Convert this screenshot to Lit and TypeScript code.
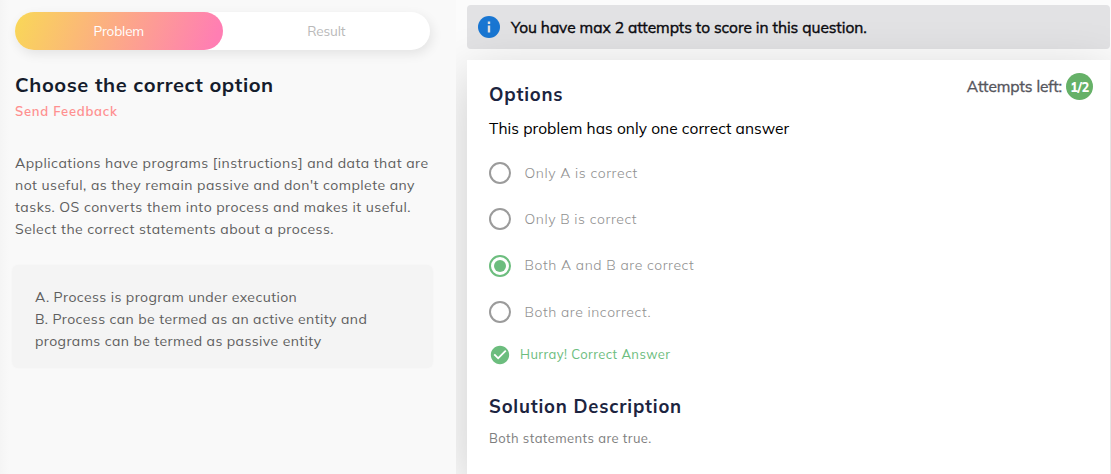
import { LitElement, html, css } from "lit";
import { customElement, property } from "lit/decorators.js";
import { classMap } from "lit/directives/class-map.js";

@customElement("option-row")
class OptionRow extends LitElement {
  @property() label = "";
  @property({ type: Boolean }) selected = false;

  static styles = css`
    :host { display: block; height: 46.3px; }
    .row { display: flex; align-items: center; height: 24px; }
    .ring {
      box-sizing: border-box; width: 22px; height: 22px; flex: none;
      border: 2px solid #9b9b9b; border-radius: 50%;
      display: grid; place-items: center; margin-right: 13.5px;
    }
    .ring.on { border-color: #6cbd7e; }
    .ring.on::after { content: ""; width: 12px; height: 12px; border-radius: 50%; background: #6cbd7e; }
    .text { font-size: 14px; font-weight: 300; letter-spacing: 0.56px; color: #909090; white-space: nowrap; padding-bottom: 0.6px; }
  `;

  render() {
    return html`<div class="row">
      <span class=${classMap({ ring: true, on: this.selected })}></span>
      <span class="text">${this.label}</span>
    </div>`;
  }
}

@customElement("app-root")
class AppRoot extends LitElement {
  static styles = css`
    :host {
      display: grid; grid-template-columns: 456px 1fr;
      width: 1111px; height: 474px; overflow: hidden;
      font-family: Muli, Mulish, Lato, sans-serif; background: #fbfbfb;
    }
    * { box-sizing: border-box; }
    h1, h2, p { margin: 0; white-space: nowrap; }
    .left { padding: 12px 26px 0 15px; background: linear-gradient(90deg, #f5f5f5, #f9f9f9 9px); position: relative; z-index: 1; }
    .tabs {
      display: flex; height: 38px; border-radius: 19px; background: #fff;
      box-shadow: 2px 4px 12px rgba(0, 0, 0, 0.09);
      font-size: 13.5px; line-height: 38px; text-align: center; letter-spacing: -0.16px;
    }
    .tab { flex: 1; color: #b9b9b9; }
    .tab.active { color: #fff; border-radius: 19px; background: linear-gradient(110deg, #f9d857, #ff7eb3 95%); }
    h1 { margin-top: 21px; font-size: 20px; line-height: 28px; letter-spacing: 0.58px; color: #151c2c; font-weight: 700; }
    .feedback { font-size: 13px; line-height: 18px; margin-top: 3px; letter-spacing: 0.75px; color: #ff9090; font-weight: 600; }
    .body { font-size: 14px; line-height: 22px; color: #5e5e5e; letter-spacing: 0.465px; }
    .intro { margin-top: 32px; }
    .statements {
      margin: 25px -3px 0; height: 103px; padding: 21px 23px 0; border-radius: 6px; letter-spacing: 0.4px;
      background: #f4f4f4; box-shadow: 0 0 3px rgba(0, 0, 0, 0.025);
    }
    .right { padding: 5px 1px 0 11px; display: flex; flex-direction: column; gap: 11px; }
    .notice {
      flex: none; height: 44px; border-radius: 4px; background: #e2e2e4;
      display: flex; align-items: center; padding-left: 11px;
      font-size: 15.5px; color: #0b0b10; white-space: nowrap;
    }
    .notice svg { width: 22px; height: 22px; margin-right: 11px; flex: none; }
    .notice span { -webkit-text-stroke: 0.4px currentColor; letter-spacing: -0.04px; padding-bottom: 1px; }
    .card {
      flex: 1; background: #fff; padding: 0 17px 0 22px;
      box-shadow: 0 14px 50px rgba(0, 0, 0, 0.19);
      clip-path: inset(-60px -1px 0 -11px);
    }
    .head { display: flex; justify-content: space-between; height: 52px; }
    h2 { font-size: 18.4px; line-height: 26px; color: #1c2440; letter-spacing: 0.8px; font-weight: 700; }
    .head h2 { margin-top: 22px; }
    .attempts { display: flex; align-items: center; height: 27px; margin-top: 13px; gap: 4px; color: #55555c; font-size: 15.5px; white-space: nowrap; }
    .attempts .label { -webkit-text-stroke: 0.35px currentColor; padding-bottom: 2px; letter-spacing: -0.07px; }
    .badge { width: 27px; height: 27px; border-radius: 50%; background: #66b168; color: #fff; font-weight: 800; font-size: 13px; line-height: 28px; text-align: center; letter-spacing: -0.4px; }
    .only { font-size: 15.5px; line-height: 24px; margin-top: 4px; color: #000; letter-spacing: 0.07px; }
    .options { margin-top: 21px; height: 182px; }
    .result { display: flex; align-items: center; height: 24px; font-size: 13px; color: #6cbd7e; letter-spacing: 0.43px; white-space: nowrap; }
    .result svg { width: 22px; height: 22px; margin-right: 9px; }
    .result span { padding-bottom: 2px; }
    .solution { margin-top: 27px; }
    .explain { font-size: 13px; line-height: 20px; margin-top: 8px; color: #7e7e7e; letter-spacing: 0.42px; }
  `;

  render() {
    return html`
      <section class="left">
        <div class="tabs"><div class="tab active">Problem</div><div class="tab">Result</div></div>
        <h1>Choose the correct option</h1>
        <p class="feedback">Send Feedback</p>
        <div class="body intro">
          <p>Applications have programs [instructions] and data that are</p>
          <p>not useful, as they remain passive and don't complete any</p>
          <p>tasks. OS converts them into process and makes it useful.</p>
          <p>Select the correct statements about a process.</p>
        </div>
        <div class="body statements">
          <p>A. Process is program under execution</p>
          <p>B. Process can be termed as an active entity and</p>
          <p>programs can be termed as passive entity</p>
        </div>
      </section>
      <section class="right">
        <div class="notice">
          <svg viewBox="0 0 22 22"><circle cx="11" cy="11" r="11" fill="#1976d2"/><path d="M9.8 9.5h2.4v7H9.8zM9.8 5.5h2.4v2.4H9.8z" fill="#e0e0e2"/></svg>
          <span>You have max 2 attempts to score in this question.</span>
        </div>
        <div class="card">
          <div class="head">
            <h2>Options</h2>
            <div class="attempts"><span class="label">Attempts left:</span><span class="badge">1/2</span></div>
          </div>
          <p class="only">This problem has only one correct answer</p>
          <div class="options">
            <option-row label="Only A is correct"></option-row>
            <option-row label="Only B is correct"></option-row>
            <option-row label="Both A and B are correct" selected></option-row>
            <option-row label="Both are incorrect."></option-row>
          </div>
          <div class="result">
            <svg viewBox="0 0 24 24"><path fill="#6cbd7e" d="M12 2C6.48 2 2 6.48 2 12s4.48 10 10 10 10-4.48 10-10S17.52 2 12 2zm-2 15l-5-5 1.41-1.41L10 14.17l7.59-7.59L19 8l-9 9z"/></svg>
            <span>Hurray! Correct Answer</span>
          </div>
          <h2 class="solution">Solution Description</h2>
          <p class="explain">Both statements are true.</p>
        </div>
      </section>
    `;
  }
}
